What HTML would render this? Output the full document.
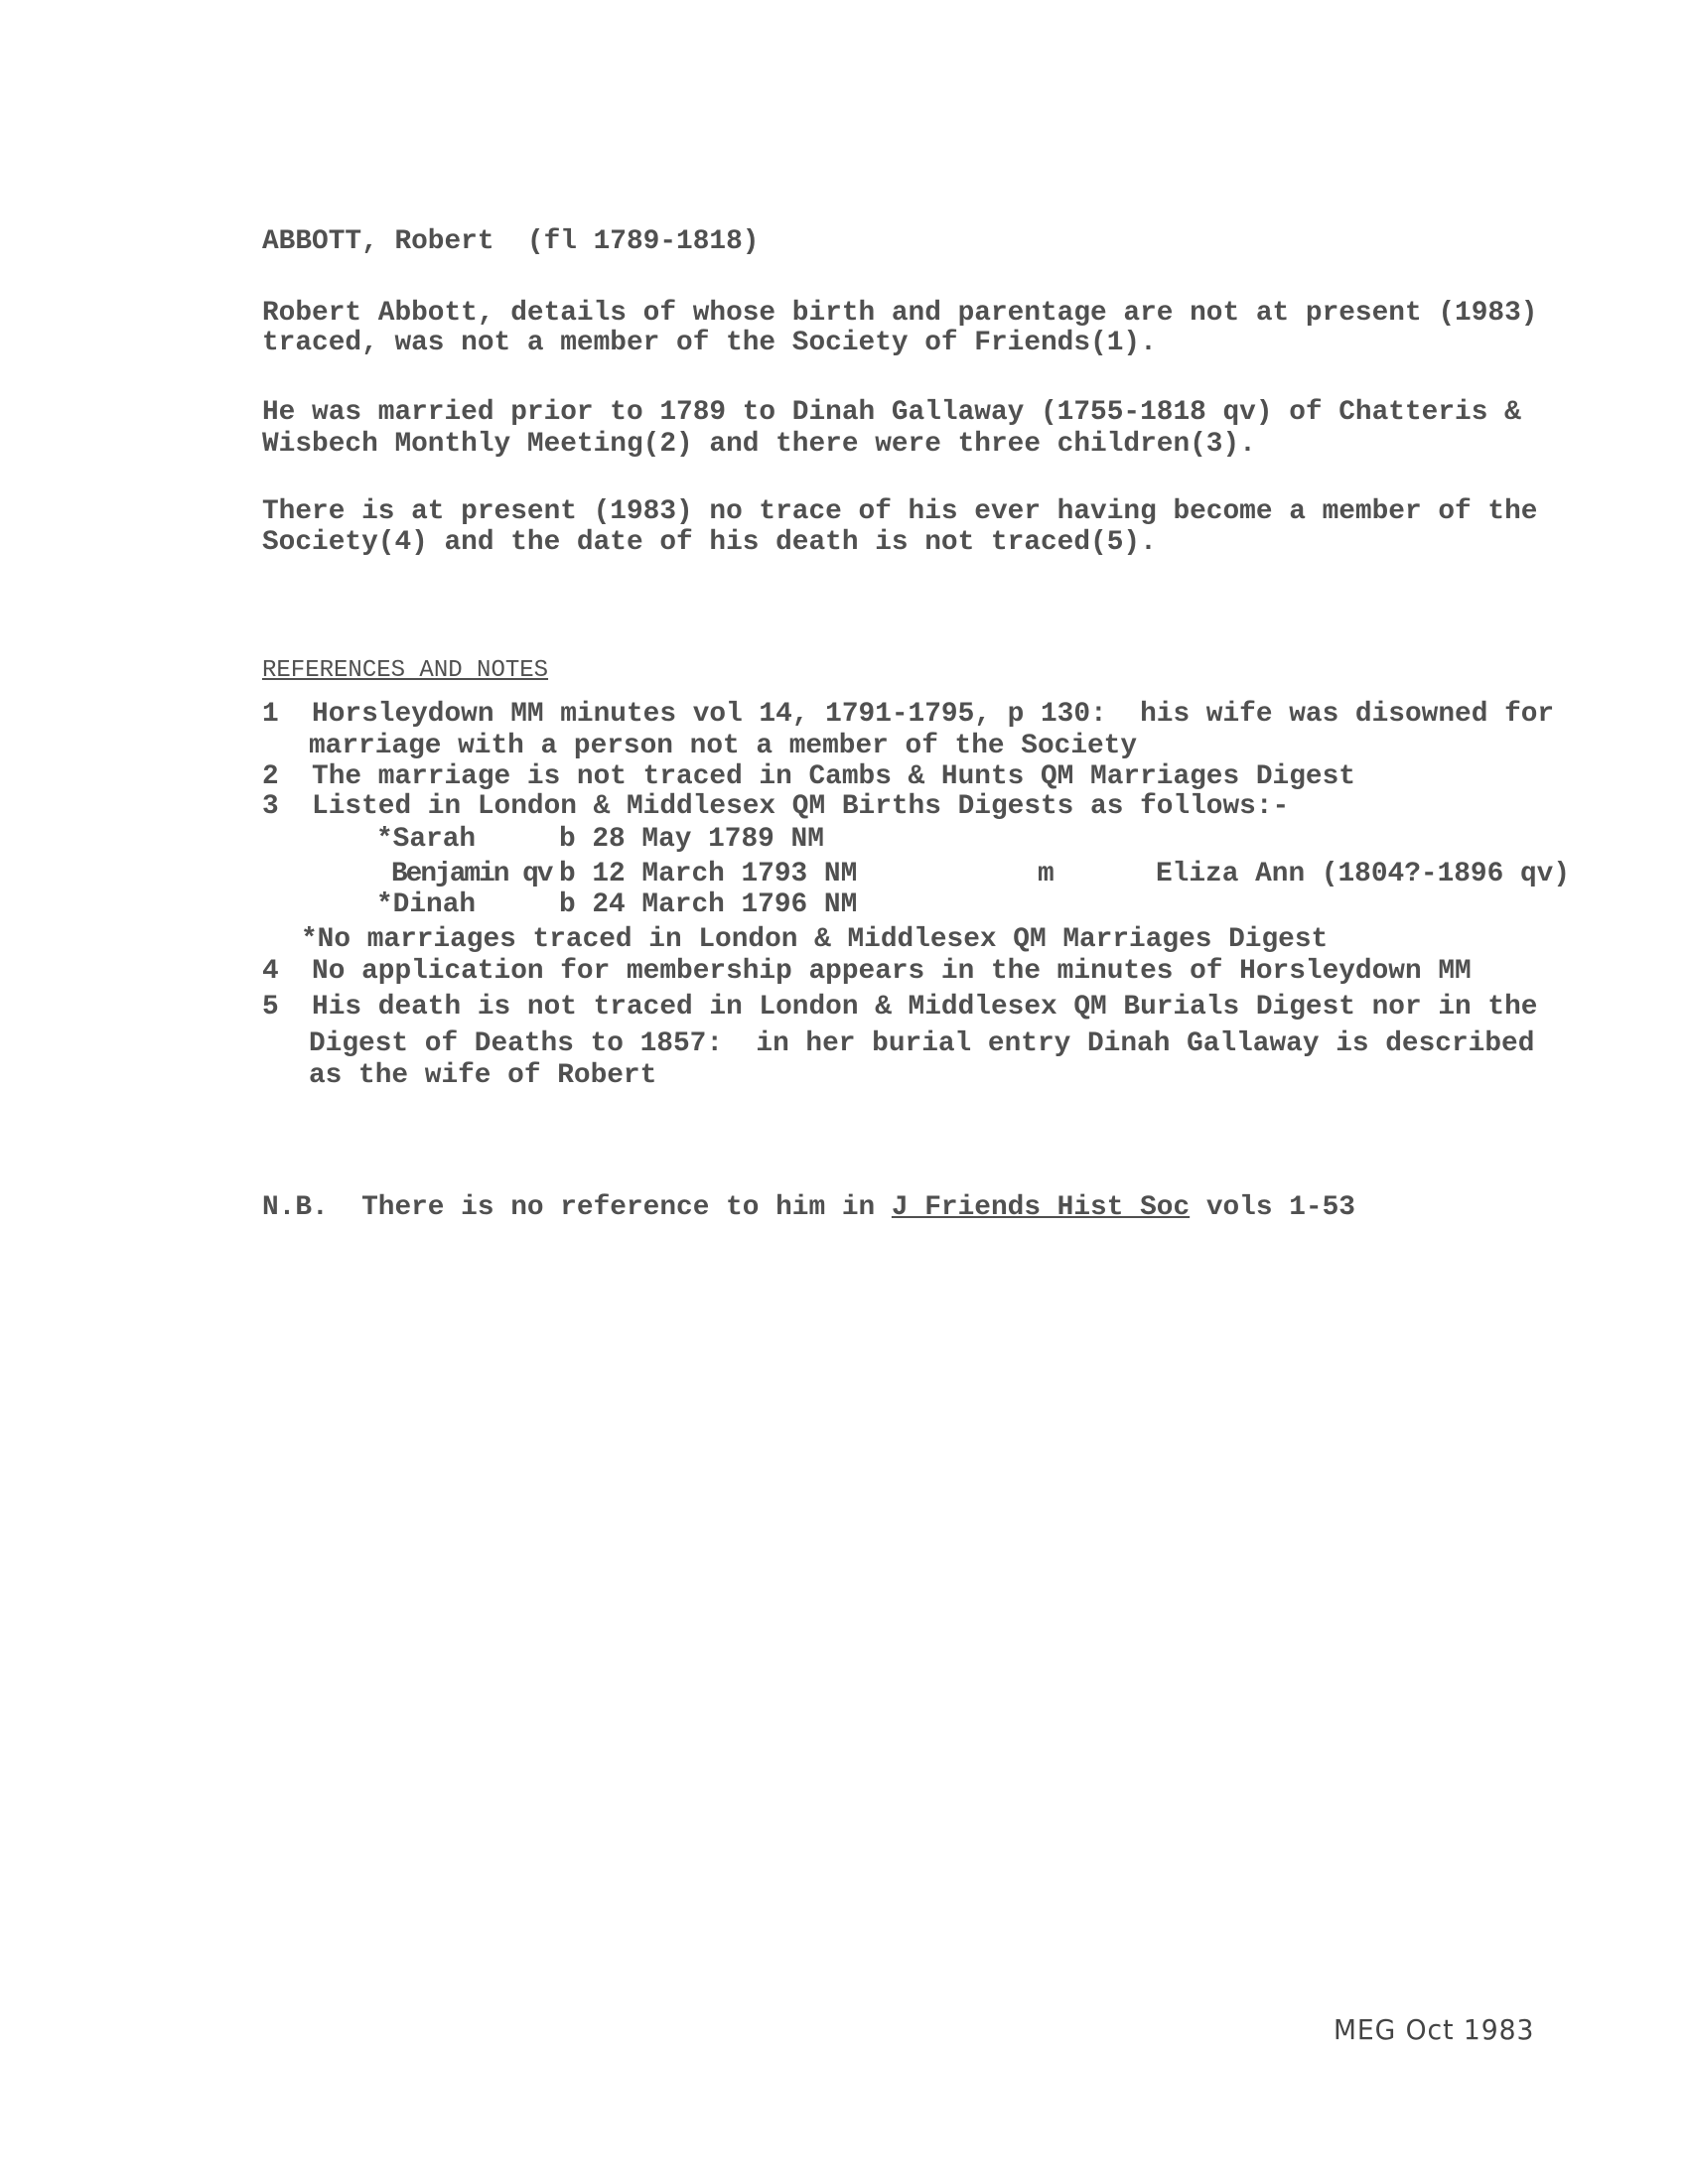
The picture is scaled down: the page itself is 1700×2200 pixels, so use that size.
<!DOCTYPE html>
<html><head><meta charset="utf-8"><style>
body{margin:0;width:1700px;height:2200px;background:#fff;position:relative;overflow:hidden}
.l{position:absolute;font-family:"Liberation Mono",monospace;font-size:27.8px;line-height:30px;color:#505050;white-space:pre;font-weight:bold;letter-spacing:0px}
.u{text-decoration:underline}
</style></head><body>
<div class="l" style="left:264px;top:229px">ABBOTT, Robert  (fl 1789-1818)</div>
<div class="l" style="left:264px;top:301px">Robert Abbott, details of whose birth and parentage are not at present (1983)</div>
<div class="l" style="left:264px;top:331px">traced, was not a member of the Society of Friends(1).</div>
<div class="l" style="left:264px;top:401px">He was married prior to 1789 to Dinah Gallaway (1755-1818 qv) of Chatteris &amp;</div>
<div class="l" style="left:264px;top:433px">Wisbech Monthly Meeting(2) and there were three children(3).</div>
<div class="l" style="left:264px;top:501px">There is at present (1983) no trace of his ever having become a member of the</div>
<div class="l" style="left:264px;top:532px">Society(4) and the date of his death is not traced(5).</div>
<div class="l u" style="left:264px;top:661px;font-size:24px;font-weight:normal">REFERENCES AND NOTES</div>
<div class="l" style="left:264px;top:705px">1  Horsleydown MM minutes vol 14, 1791-1795, p 130:  his wife was disowned for</div>
<div class="l" style="left:311px;top:737px">marriage with a person not a member of the Society</div>
<div class="l" style="left:264px;top:768px">2  The marriage is not traced in Cambs &amp; Hunts QM Marriages Digest</div>
<div class="l" style="left:264px;top:798px">3  Listed in London &amp; Middlesex QM Births Digests as follows:-</div>
<div class="l" style="left:379px;top:831px">*Sarah</div><div class="l" style="left:563px;top:831px">b 28 May 1789 NM</div>
<div class="l" style="left:394px;top:866px;letter-spacing:-2px">Benjamin qv</div><div class="l" style="left:563px;top:866px">b 12 March 1793 NM</div>
<div class="l" style="left:1045px;top:866px">m</div><div class="l" style="left:1164px;top:866px">Eliza Ann (1804?-1896 qv)</div>
<div class="l" style="left:379px;top:897px">*Dinah</div><div class="l" style="left:563px;top:897px">b 24 March 1796 NM</div>
<div class="l" style="left:303px;top:932px">*No marriages traced in London &amp; Middlesex QM Marriages Digest</div>
<div class="l" style="left:264px;top:964px">4  No application for membership appears in the minutes of Horsleydown MM</div>
<div class="l" style="left:264px;top:1000px">5  His death is not traced in London &amp; Middlesex QM Burials Digest nor in the</div>
<div class="l" style="left:311px;top:1037px">Digest of Deaths to 1857:  in her burial entry Dinah Gallaway is described</div>
<div class="l" style="left:311px;top:1069px">as the wife of Robert</div>
<div class="l" style="left:264px;top:1202px">N.B.  There is no reference to him in <span class="u">J Friends Hist Soc</span> vols 1-53</div>
<div style="position:absolute;left:1343px;top:2028px;font-family:'DejaVu Sans',sans-serif;font-size:28px;color:#444;letter-spacing:1px;transform:scaleX(0.95);transform-origin:left">MEG Oct 1983</div>
</body></html>
